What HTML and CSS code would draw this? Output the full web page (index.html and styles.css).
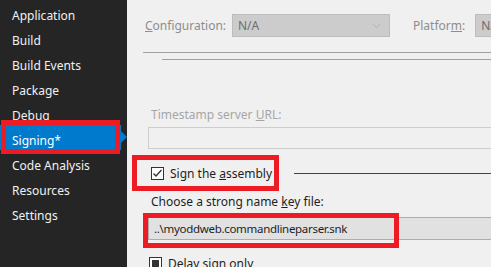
FILE: index.html
```html
<!DOCTYPE html>
<html lang="en">
<head>
    <meta charset="UTF-8">
    <title>Project properties - Signing</title>
    <link rel="stylesheet" href="styles.css">
</head>
<body>
    <div class="window">
        <!-- Liste des pages de propriétés -->
        <nav class="sidebar">
            <div class="nav-item">Application</div>
            <div class="nav-item">Build</div>
            <div class="nav-item">Build Events</div>
            <div class="nav-item">Package</div>
            <div class="nav-item">Debug</div>
            <div class="nav-item active">Signing*</div>
            <div class="nav-item">Code Analysis</div>
            <div class="nav-item">Resources</div>
            <div class="nav-item">Settings</div>
        </nav>

        <main class="panel">
            <div class="config-row">
                <span class="config-label"><u>C</u>onfiguration:</span>
                <div class="combo combo-config">
                    <span>N/A</span>
                    <svg class="chevron" width="9" height="5" viewBox="0 0 9 5"><polyline points="0.5,0.5 4.5,4.5 8.5,0.5" fill="none" stroke="#b4b4b4" stroke-width="1"/></svg>
                </div>
                <span class="config-label platform-label">Platfor<u>m</u>:</span>
                <div class="combo combo-platform"><span>N/A</span></div>
            </div>

            <div class="rule rule-outer"></div>
            <div class="rule rule-inner"></div>

            <div class="field field-timestamp">
                <div class="field-label disabled">Timestamp server <u>U</u>RL:</div>
                <div class="textbox textbox-disabled"></div>
            </div>

            <div class="group-head">
                <span class="checkbox checked">
                    <svg width="11" height="11" viewBox="0 0 11 11"><polyline points="1.5,5.5 4,8 9.5,2" fill="none" stroke="#333" stroke-width="1.3"/></svg>
                </span>
                <span class="check-label">Sign the <u>a</u>ssembly</span>
                <span class="group-line"></span>
            </div>

            <div class="field field-key">
                <div class="field-label">Choose a strong name <u>k</u>ey file:</div>
                <div class="textbox textbox-key">..\myoddweb.commandlineparser.snk</div>
            </div>

            <div class="check-row">
                <span class="checkbox mixed"><span class="mixed-fill"></span></span>
                <span class="check-label">Delay sign only</span>
            </div>
        </main>

        <!-- Cadres rouges d'annotation -->
        <div class="mark mark-nav"></div>
        <div class="mark mark-sign"></div>
        <div class="mark mark-key"></div>
    </div>
</body>
</html>
```

FILE: styles.css
```css
body {
    margin: 0;
    font-family: "Noto Sans", sans-serif;
    font-size: 12px;
    overflow: hidden;
}

.window {
    position: relative;
    display: flex;
    width: 491px;
    height: 267px;
    overflow: hidden;
}

/* Barre latérale sombre */
.sidebar {
    width: 127px;
    flex-shrink: 0;
    background-color: #252526;
}

.nav-item {
    position: relative;
    height: 25px;
    line-height: 31px;
    padding-left: 12px;
    color: #f1f1f1;
    font-size: 12px;
    white-space: nowrap;
}

    .nav-item.active {
        background-color: #007acc;
        margin-right: 6px;
        color: #ffffff;
    }

    .nav-item.active::after {
        content: "";
        position: absolute;
        right: -6px;
        top: 6px;
        border-left: 6px solid #007acc;
        border-top: 6px solid transparent;
        border-bottom: 6px solid transparent;
    }

/* Panneau principal */
.panel {
    flex: 1;
    background-color: #f0f0f0;
    color: #1e1e1e;
    min-width: 0;
}

.config-row {
    display: flex;
    align-items: center;
    margin-top: 14px;
    padding-left: 18px;
    height: 23px;
    white-space: nowrap;
}

    .config-row > * {
        flex-shrink: 0;
    }

.config-label {
    color: #8d8d8d;
    width: 87px;
}

.platform-label {
    width: auto;
    margin-left: 23px;
    margin-right: 10px;
}

.combo {
    box-sizing: border-box;
    height: 23px;
    display: flex;
    align-items: center;
    justify-content: space-between;
    padding: 0 8px 0 5px;
    background-color: #cccccc;
    border: 1px solid #bdbdbd;
    color: #6d6d6d;
}

.combo-config {
    width: 158px;
}

.combo-platform {
    width: 80px;
}

.rule {
    height: 1px;
    background-color: #a0a0a0;
}

.rule-outer {
    margin: 15px 0 0 16px;
}

.rule-inner {
    margin: 6px 0 0 35px;
}

.field {
    padding-left: 21px;
}

.field-label {
    height: 16px;
    line-height: 16px;
    padding-left: 3px;
    white-space: nowrap;
}

    .field-label.disabled {
        color: #a6a6a6;
    }

.field-timestamp {
    margin-top: 47px;
}

.textbox {
    box-sizing: border-box;
    margin-top: 4px;
    height: 22px;
    width: 400px;
}

.textbox-disabled {
    border: 1px solid #cdcdcd;
    background-color: #f0f0f0;
}

.textbox-key {
    margin-top: 7px;
    height: 23px;
    line-height: 21px;
    padding-left: 5px;
    border: 1px solid #adadad;
    background-color: #e1e1e1;
    white-space: nowrap;
    font-size: 11.5px;
    letter-spacing: -0.3px;
}

.group-head {
    display: flex;
    align-items: center;
    margin-top: 17px;
    padding-left: 24px;
    height: 14px;
}

.checkbox {
    box-sizing: border-box;
    width: 13px;
    height: 13px;
    border: 1px solid #333333;
    background-color: #ffffff;
    display: flex;
    align-items: center;
    justify-content: center;
    flex-shrink: 0;
}

.check-label {
    margin-left: 6px;
    white-space: nowrap;
}

.group-line {
    flex: 1;
    height: 1px;
    background-color: #444444;
    margin-left: 22px;
}

.field-key {
    margin-top: 14px;
}

.check-row {
    display: flex;
    align-items: center;
    margin-top: 16px;
    padding-left: 22px;
    height: 14px;
}

.mixed-fill {
    width: 7px;
    height: 7px;
    background-color: #333333;
}

/* Annotations rouges par-dessus la capture */
.mark {
    position: absolute;
    box-sizing: border-box;
    border: 5px solid #ed1c24;
}

.mark-nav {
    left: 1px;
    top: 120px;
    width: 119px;
    height: 34px;
}

.mark-sign {
    left: 132px;
    top: 155px;
    width: 147px;
    height: 36px;
}

.mark-key {
    left: 143px;
    top: 213px;
    width: 256px;
    height: 35px;
}
```
